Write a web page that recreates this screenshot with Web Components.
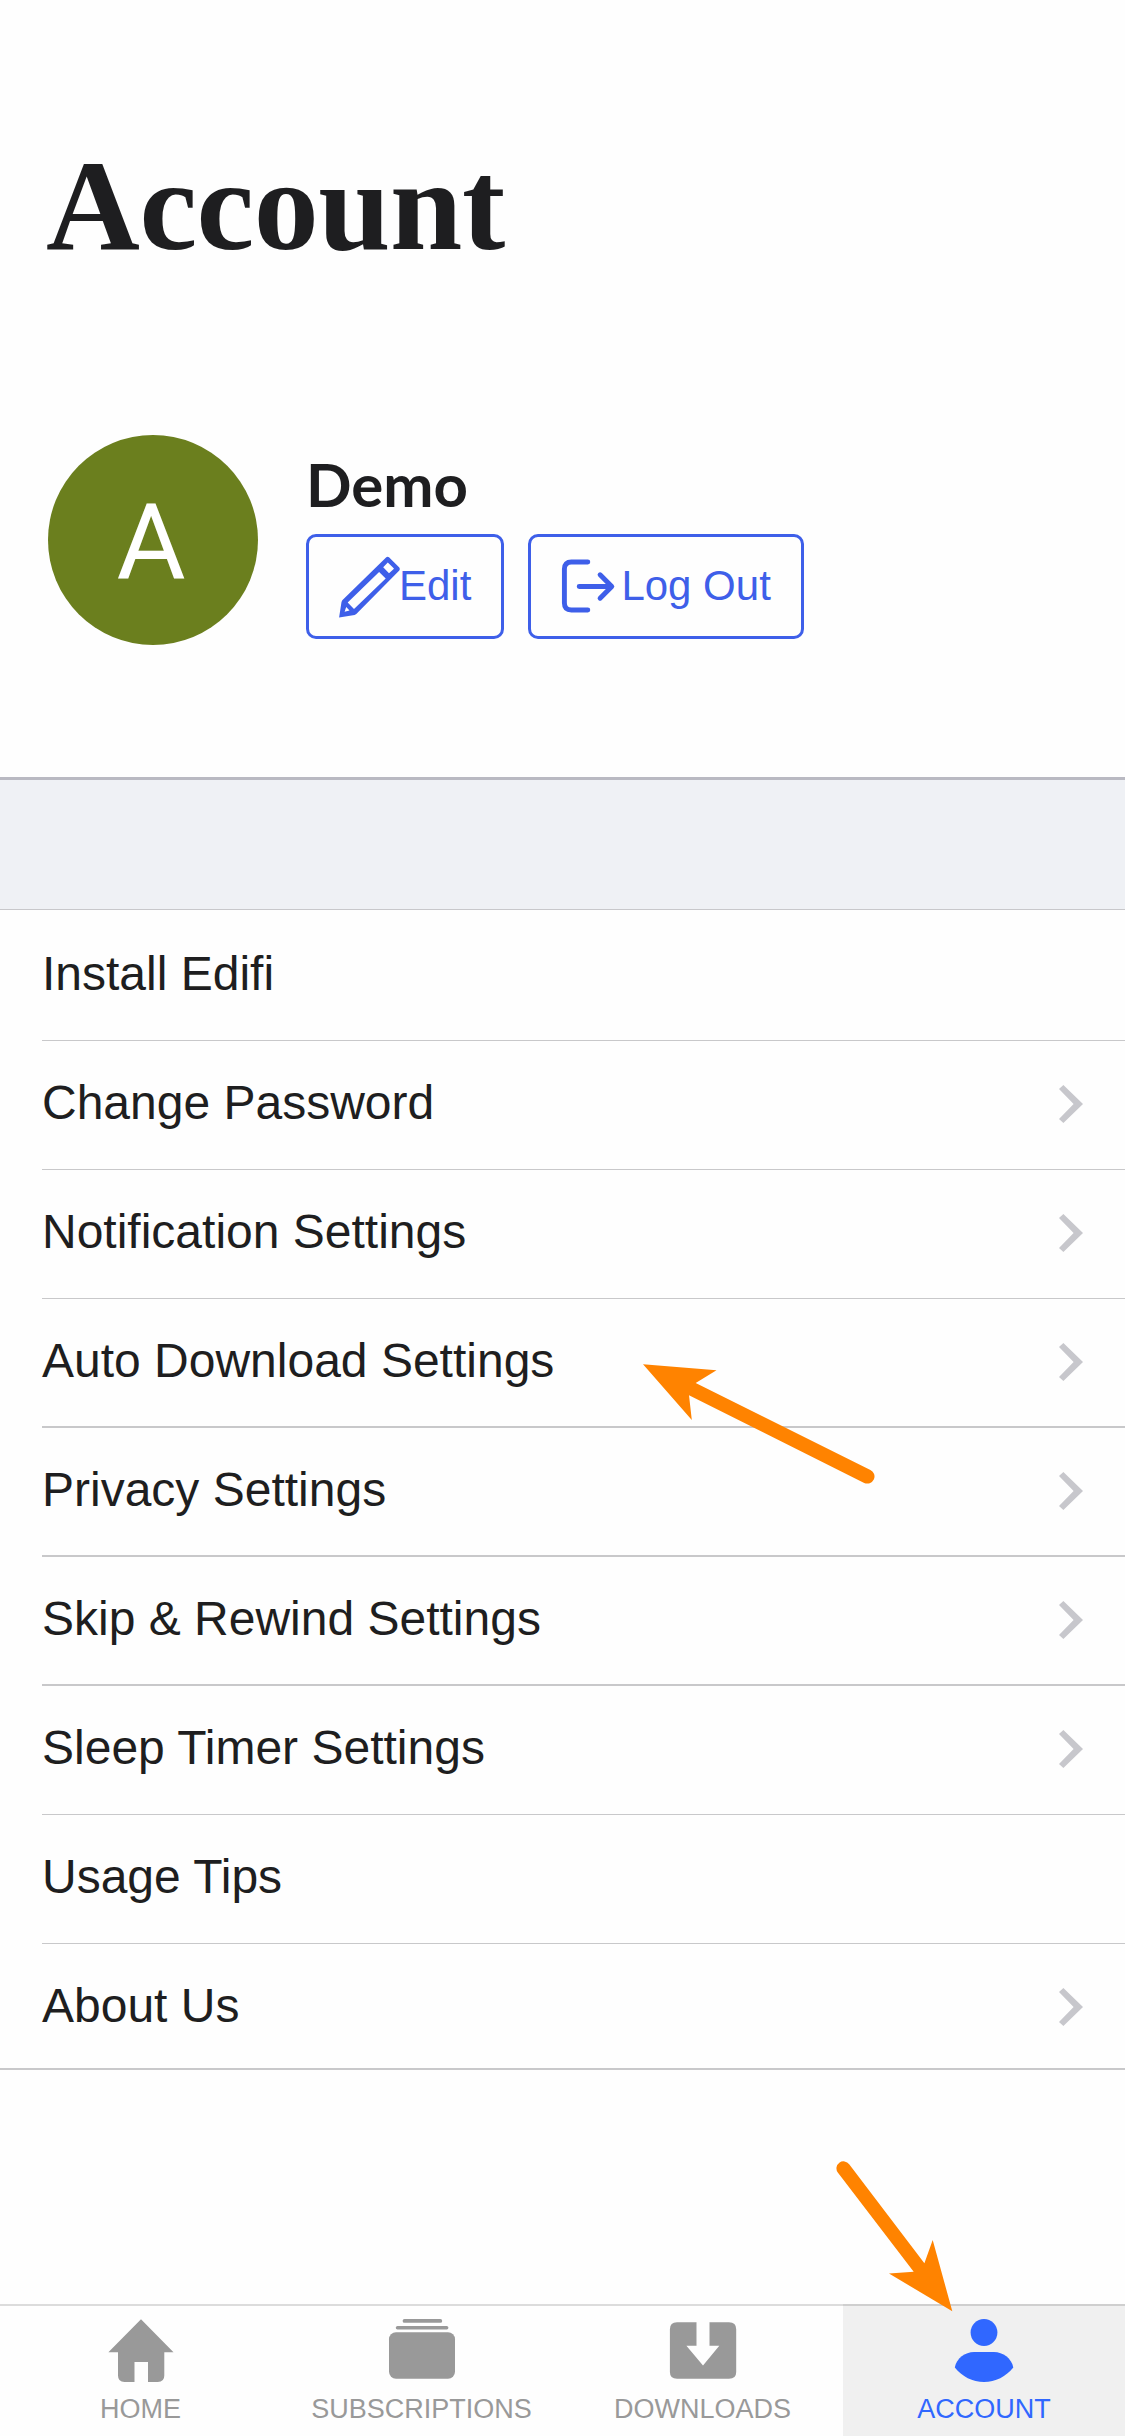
<!DOCTYPE html>
<html lang="en">
<head>
<meta charset="utf-8">
<title>Account</title>
<style>
html,body{margin:0;background:#fefefe}
body{font-family:"Liberation Sans",Arial,sans-serif;color:#1e1e20}
</style>
</head>
<body>
<account-page>
  <page-title>Account</page-title>
  <user-card initial="A" name="Demo">
    <action-button icon="edit">Edit</action-button>
    <action-button icon="logout">Log Out</action-button>
  </user-card>
  <section-gap></section-gap>
  <settings-list>
    <settings-row class="first">Install Edifi</settings-row>
    <settings-row link>Change Password</settings-row>
    <settings-row link>Notification Settings</settings-row>
    <settings-row link class="strong">Auto Download Settings</settings-row>
    <settings-row link class="strong">Privacy Settings</settings-row>
    <settings-row link class="strong">Skip &amp; Rewind Settings</settings-row>
    <settings-row link>Sleep Timer Settings</settings-row>
    <settings-row>Usage Tips</settings-row>
    <settings-row link class="last">About Us</settings-row>
  </settings-list>
  <tab-bar slot="footer">
    <tab-item icon="home">HOME</tab-item>
    <tab-item icon="subs">SUBSCRIPTIONS</tab-item>
    <tab-item icon="down">DOWNLOADS</tab-item>
    <tab-item icon="user" active>ACCOUNT</tab-item>
  </tab-bar>
  <pointer-arrows slot="overlay"></pointer-arrows>
</account-page>
<script>
const icons = {
  edit: `<svg width="60" height="60" viewBox="0 0 60 60" overflow="visible"><path fill="currentColor" fill-rule="evenodd" d="M.1 60.500 2.500 45 3.300 43.200 47.300.2Q48.700-.7 50 .3L60.300 10.600Q61.500 12 60.300 13.400L17.300 57 15.600 58ZM8.700 45.600 15 52.100 46.700 21.400 40.100 15ZM48.800 5.500 44.200 10.200 50 16.200 54.700 12Q55 11.600 54.700 11.200ZM7.200 50 5.600 54.800 10.500 53.400Z"/></svg>`,
  logout: `<svg width="60" height="60" viewBox="0 0 60 60" fill="none" stroke="currentColor" stroke-width="4.900" stroke-linecap="round" stroke-linejoin="round"><path d="M26.800 5H10.400Q3.400 5 3.400 12V46Q3.400 53 10.400 53H26.800M18.200 29.500H50M39.100 17.800 50.800 29.500 39.100 41.200"/></svg>`,
  home: `<path d="M33 1.300 65.500 34.300H56.300V57.500Q56.300 64 49.800 64H40V44H26.500V64H16.500Q10 64 10 57.500V34.300H.4Z"/>`,
  subs: `<rect x="13.600" y="1" width="39.600" height="3.800" rx="1.900"/><rect x="6.800" y="8" width="52.600" height="3.500" rx="1.700"/><rect x="0" y="14.200" width="66" height="46.600" rx="7"/>`,
  down: `<path d="M7 4.300H26.500V27.700H16.400L33 47.500 49.300 27.700H39.500V4.300H59Q66.200 4.300 66.200 11.300V54Q66.200 60.800 59 60.800H7Q-.1 60.800-.1 54V11.300Q-.1 4.300 7 4.300Z"/>`,
  user: `<circle cx="33" cy="14.500" r="13.400"/><path d="M23 34.100H43C52 34.100 60.500 40.500 62.300 49.400 55 58.500 44.500 63.900 33 63.900 21.500 63.900 11 58.500 3.800 49.400 5.500 40.500 14 34.100 23 34.100Z"/>`
};

function define(name, markup) {
  customElements.define(name, class extends HTMLElement {
    constructor() {
      super();
      this.attachShadow({ mode: 'open' }).innerHTML = markup(this);
    }
  });
}

define('account-page', () => `<style>
  :host{display:flex;flex-direction:column;position:relative;width:1125px;height:2436px;overflow:hidden;background:#fefefe}
  main{flex:1}
</style><main><slot></slot></main><slot name="footer"></slot><slot name="overlay"></slot>`);

define('page-title', () => `<style>
  :host{display:block;height:435px;box-sizing:border-box;padding:130px 0 0 46px}
  h1{margin:0;font:bold 130px/150px "Liberation Serif",serif;letter-spacing:-.5px}
</style><h1><slot></slot></h1>`);

define('user-card', el => `<style>
  :host{display:flex;height:342px;box-sizing:border-box;padding-left:48px;gap:48px}
  .avatar{width:210px;height:210px;border-radius:50%;background:#6b7f1e;color:#fff;display:flex;justify-content:center;font:106px/216px Roboto,sans-serif;text-indent:-4px}
  .info{padding-top:13px}
  h2{margin:0;height:86px;font:bold 60px/72px Lato,sans-serif}
  .actions{display:flex;gap:24px}
</style><div class="avatar">${el.getAttribute('initial')}</div>
<div class="info"><h2>${el.getAttribute('name')}</h2><div class="actions"><slot></slot></div></div>`);

define('action-button', el => `<style>
  :host{display:block}
  button{display:flex;align-items:center;height:105px;box-sizing:border-box;border:3px solid #3e5fe9;border-radius:10px;background:none;color:#3e5fe9;padding:0 30px;font:42px/48px "Liberation Sans",Arial,sans-serif;white-space:nowrap}
  svg{display:block;flex:none}
  span{padding-bottom:2px}
</style><button>${icons[el.getAttribute('icon')]}<span><slot></slot></span></button>`);

define('section-gap', () => `<style>
  :host{display:block;height:133px;box-sizing:border-box;background:#eff1f5;border-top:3px solid #b9b9c2;border-bottom:1px solid #c8c8cb}
</style>`);

define('settings-list', () => `<style>:host{display:block}</style><slot></slot>`);

define('settings-row', el => `<style>
  :host{display:block;height:129px;padding-left:42px;box-sizing:border-box}
  :host(.first){height:131px}
  :host(.last){height:126px;padding-left:0;border-bottom:2px solid #c8c8ca}
  .row{display:flex;justify-content:space-between;height:100%;box-sizing:border-box;border-bottom:1px solid #c8c8ca;font-size:48px;line-height:123px;padding-right:42px}
  :host(.first) .row{padding-top:2px}
  :host(.strong) .row{border-bottom-width:2px}
  :host(.last) .row{border:0;padding-left:42px}
  svg{margin-top:44px}
</style><div class="row"><span><slot></slot></span>${el.hasAttribute('link') ? '<svg width="24" height="38" viewBox="0 0 24 38"><path fill="#c7c7cc" d="M4.400 0 24 19 4.400 38 0 34 14.600 19 0 4Z"/></svg>' : ''}</div>`);

define('tab-bar', () => `<style>
  :host{display:flex;height:132px;box-sizing:border-box}
</style><slot></slot>`);

define('tab-item', el => `<style>
  :host{flex:0 0 281px;display:flex;flex-direction:column;align-items:center;color:#999;font-size:27px;line-height:30px;box-sizing:border-box;padding-top:12px;border-top:2px solid #dcdcdc}
  :host([active]){flex:1;color:#3067ff;background:#f0f0f0;border-top-color:#cfcfcf}
  svg{display:block;margin-bottom:10px}
</style><svg width="66" height="66" viewBox="0 0 66 66" fill="currentColor" overflow="visible">${icons[el.getAttribute('icon')]}</svg><span><slot></slot></span>`);

define('pointer-arrows', () => `<style>
  :host{position:absolute;inset:0;pointer-events:none}
  svg{display:block}
</style><svg width="1125" height="2436" viewBox="0 0 1125 2436" fill="#ff8300">
<path d="M643 1364.300 716.500 1370.300 695.700 1383 870.400 1469.900A7.200 7.200 0 0 1 864.200 1482.900L689 1395.300 691.800 1420Z"/>
<path d="M952.300 2311.300 889 2273.500 913.700 2271.700 837.800 2172.600A7 7 0 0 1 849.200 2164.200L924.400 2263.300 932.700 2240Z"/>
</svg>`);
</script>
</body>
</html>
